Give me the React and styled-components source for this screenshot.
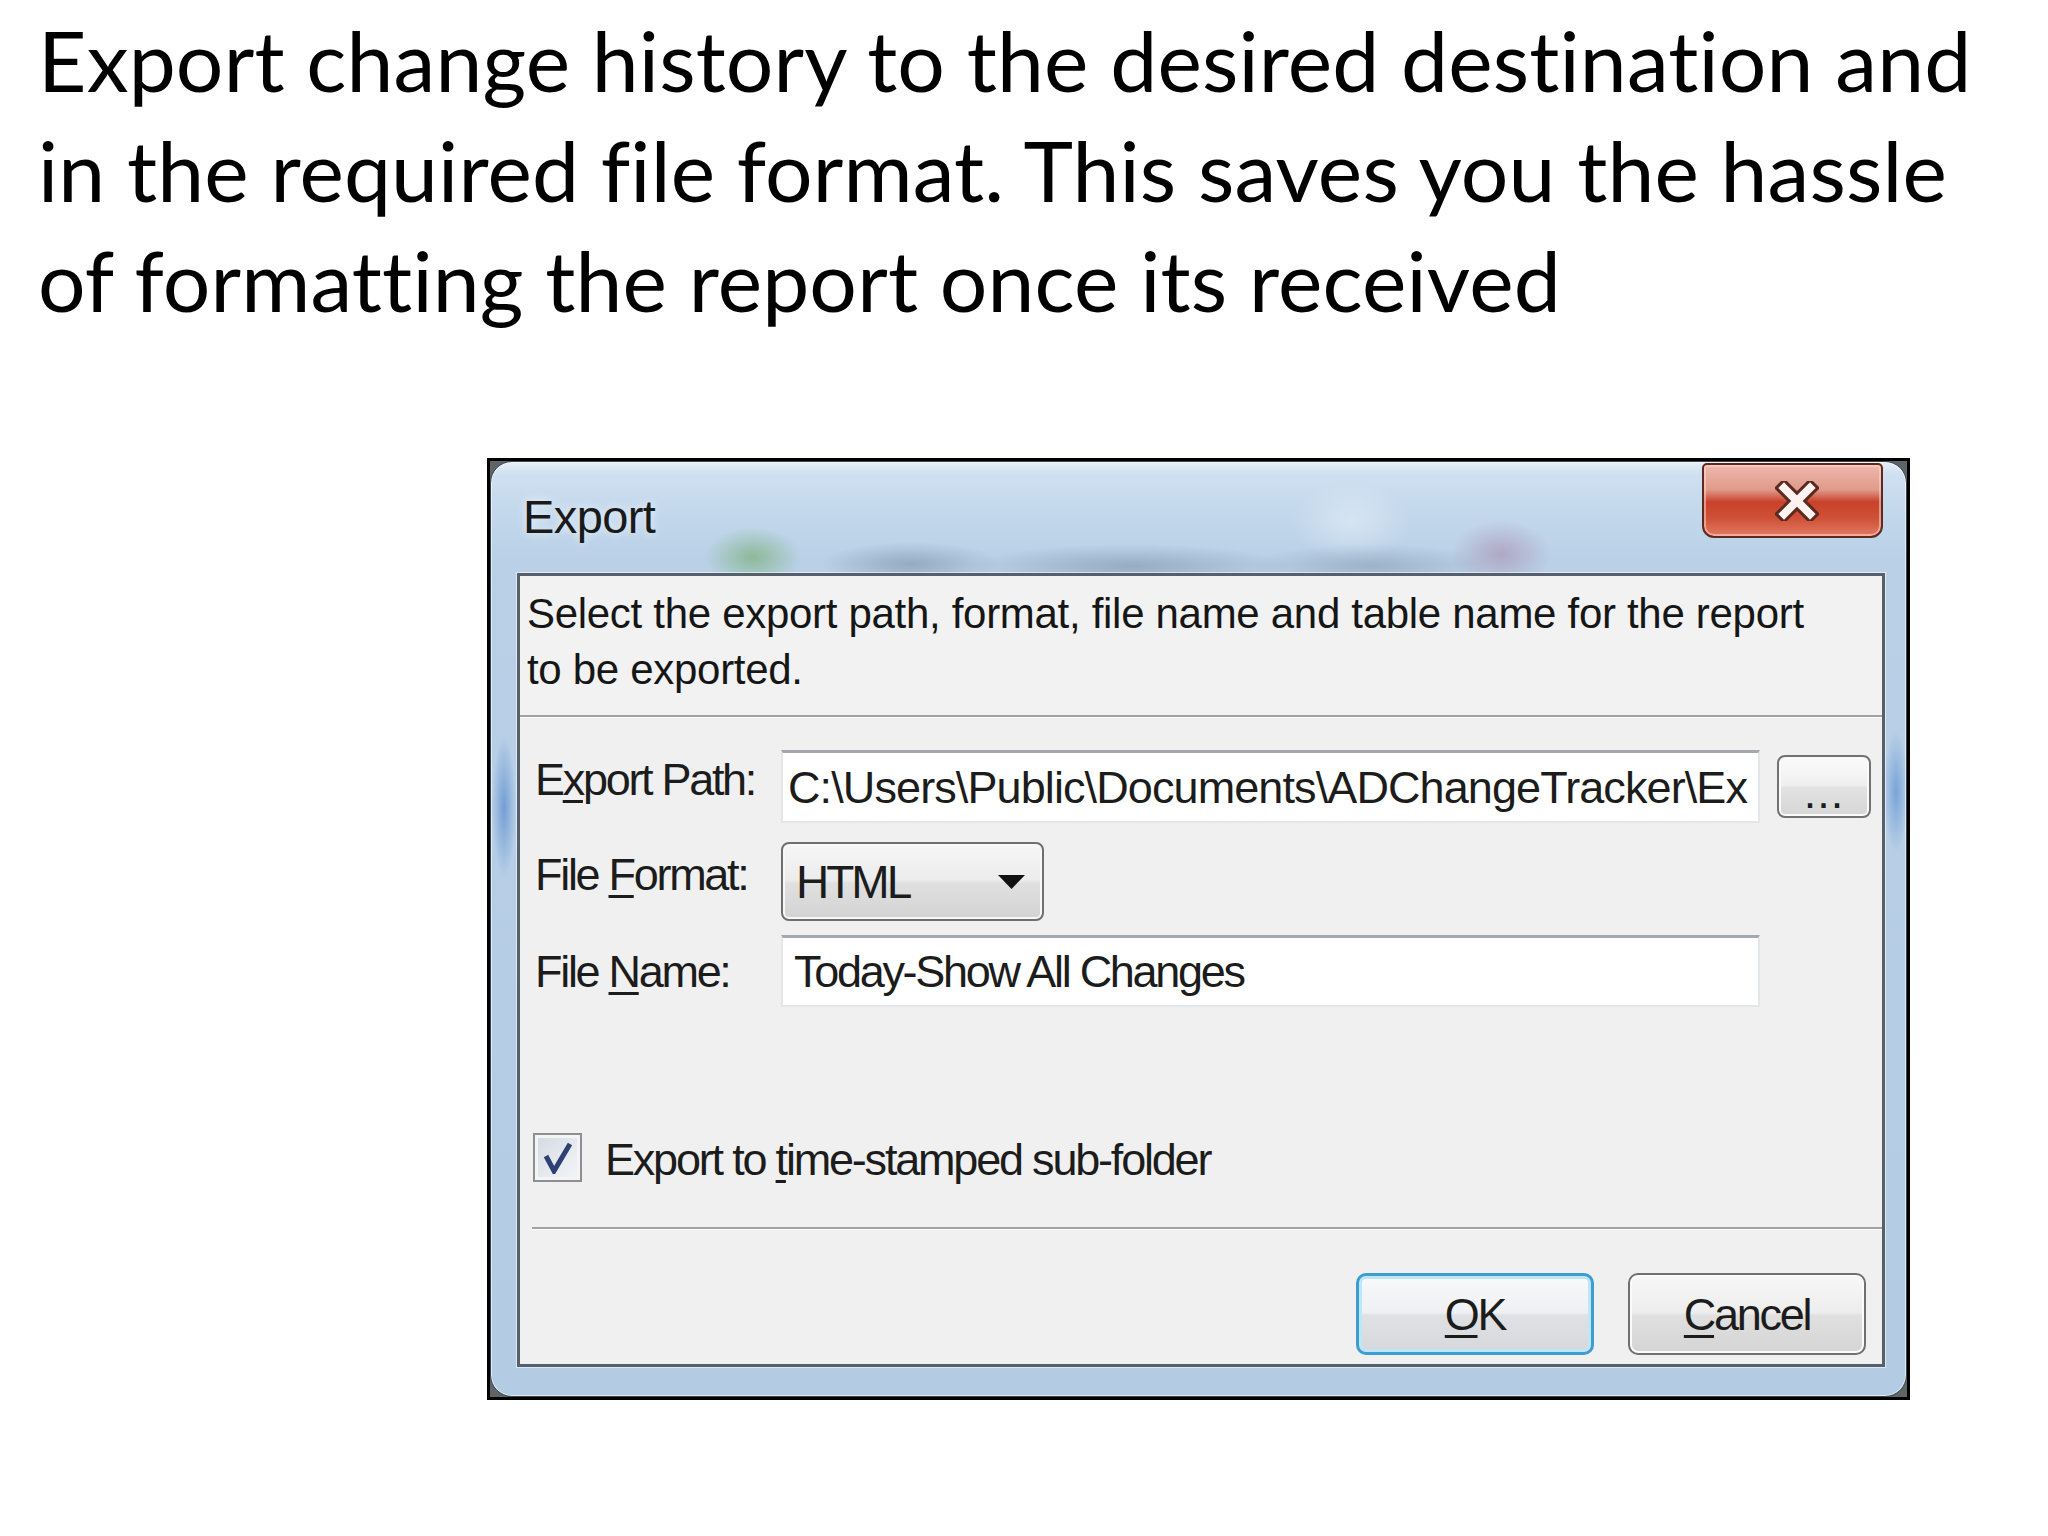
import React from "react";
import styled, { createGlobalStyle } from "styled-components";

const GlobalStyle = createGlobalStyle`
  html, body { margin: 0; padding: 0; background: #ffffff; }
  body { width: 2048px; min-height: 1536px; overflow: hidden; }
  * { box-sizing: border-box; }
`;

const Page = styled.div`
  width: 2048px;
  min-height: 1536px;
  background: #ffffff;
  padding-top: 5px;
`;

const Heading = styled.p`
  margin: 0;
  padding-left: 38px;
  font-family: Lato, "Open Sans", sans-serif;
  font-size: 84px;
  line-height: 110px;
  letter-spacing: 0.15px;
  color: #000000;
  white-space: nowrap;
  font-variant-ligatures: none;
  font-feature-settings: "liga" 0, "clig" 0;
`;

const Window = styled.div`
  margin: 123px 0 0 487px;
  width: 1423px;
  height: 942px;
  border: 3px solid #000000;
  background: #5f6468;
  display: flex;
  font-family: "Liberation Sans", Arial, sans-serif;
  color: #1c1c1c;
`;

const Frame = styled.div`
  flex: 1;
  display: flex;
  flex-direction: column;
  border: 1px solid #3a444f;
  border-radius: 22px;
  padding: 0 21px 29px 26px;
  box-shadow: inset 0 0 0 1px rgba(255, 255, 255, 0.6);
  background:
    radial-gradient(ellipse 12px 70px at 13px 345px, rgba(70, 125, 200, 0.6), transparent),
    radial-gradient(ellipse 12px 60px at 1405px 330px, rgba(80, 135, 205, 0.6), transparent),
    radial-gradient(ellipse 48px 30px at 262px 95px, rgba(110, 170, 100, 0.6), transparent),
    radial-gradient(ellipse 90px 22px at 420px 102px, rgba(80, 100, 120, 0.35), transparent),
    radial-gradient(ellipse 160px 22px at 640px 104px, rgba(85, 105, 125, 0.35), transparent),
    radial-gradient(ellipse 50px 34px at 1010px 92px, rgba(160, 105, 145, 0.4), transparent),
    radial-gradient(ellipse 120px 22px at 880px 104px, rgba(90, 110, 130, 0.3), transparent),
    radial-gradient(ellipse 60px 40px at 860px 60px, rgba(255, 255, 255, 0.35), transparent),
    linear-gradient(180deg, #e6f0f9 0px, #cfe0f1 12px, #c3d8ec 50px, #b9d0e7 100px, #b3cbe3 100%);
`;

const TitleBar = styled.div`
  height: 111px;
  display: flex;
  justify-content: space-between;
  align-items: flex-start;
  padding-left: 6px;
`;

const Title = styled.div`
  margin-top: 31px;
  font-size: 47px;
  line-height: 47px;
  letter-spacing: -0.6px;
  color: #1a1a1a;
  text-shadow: 0 0 10px rgba(255, 255, 255, 0.8);
`;

const CloseButton = styled.div`
  width: 181px;
  height: 75px;
  margin: 1px 2px 0 0;
  border: 2px solid #5e2a20;
  border-radius: 5px 5px 12px 12px;
  display: flex;
  align-items: center;
  justify-content: center;
  padding-left: 8px;
  background: linear-gradient(
    180deg,
    #ecb8ac 0%,
    #e09a8a 35%,
    #c9412a 52%,
    #cf5138 75%,
    #e07a62 100%
  );
  box-shadow: inset 0 0 0 2px rgba(255, 215, 205, 0.55);
`;

const Client = styled.div`
  flex: 1;
  display: flex;
  flex-direction: column;
  border: 3px solid #56606b;
  background: #f0f0f0;
  box-shadow: 0 0 0 1px rgba(255, 255, 255, 0.55);
`;

const Description = styled.div`
  height: 139px;
  padding: 10px 0 0 7px;
  font-size: 42px;
  line-height: 56px;
  letter-spacing: -0.3px;
  color: #161616;
  background: #f2f2f2;
`;

const Separator = styled.div`
  height: 3px;
  margin-left: ${(p) => p.$inset || 0}px;
  margin-top: ${(p) => p.$top || 0}px;
  background: #a2a2a2;
  border-bottom: 1px solid #ffffff;
`;

const Fields = styled.div`
  display: flex;
  flex-direction: column;
  padding: 32px 0 0 15px;
`;

const Row = styled.div`
  display: flex;
  align-items: flex-start;
  margin-top: ${(p) => p.$top || 0}px;
`;

const Label = styled.div`
  width: 246px;
  margin-top: ${(p) => p.$top}px;
  font-size: 45px;
  line-height: 45px;
  letter-spacing: -2.3px;
  white-space: nowrap;
`;

const Key = styled.span`
  text-decoration: underline;
  text-decoration-thickness: 3px;
  text-underline-offset: 5px;
`;

const TextBox = styled.div`
  width: 979px;
  height: ${(p) => p.$h}px;
  display: flex;
  align-items: center;
  padding-left: ${(p) => p.$pad}px;
  background: #ffffff;
  border: 2px solid #e4e7ea;
  border-top: 3px solid #a4a8ac;
  overflow: hidden;
  white-space: nowrap;
  font-size: 45px;
  line-height: 45px;
  letter-spacing: ${(p) => p.$ls}px;
  color: #1c1c1c;
`;

const BrowseButton = styled.div`
  width: 94px;
  height: 63px;
  margin: 5px 0 0 17px;
  border: 2px solid #727272;
  border-radius: 8px;
  display: flex;
  align-items: flex-end;
  justify-content: center;
  padding-bottom: 1px;
  font-size: 45px;
  line-height: 45px;
  letter-spacing: 1px;
  background: linear-gradient(180deg, #fbfbfb 0%, #efefef 48%, #e2e2e2 52%, #d6d6d6 100%);
  box-shadow: inset 0 0 0 2px #fafafa;
`;

const Combo = styled.div`
  width: 263px;
  height: 79px;
  display: flex;
  align-items: center;
  justify-content: space-between;
  padding: 0 17px 0 13px;
  border: 2px solid #6f6f6f;
  border-radius: 8px;
  background: linear-gradient(180deg, #f6f6f6 0%, #ececec 48%, #e0e0e0 52%, #d3d3d3 100%);
  box-shadow: inset 0 0 0 2px #f8f8f8;
  font-size: 46px;
  line-height: 46px;
  letter-spacing: -3px;
`;

const CheckRow = styled.div`
  display: flex;
  align-items: flex-start;
  gap: 23px;
  margin: 126px 0 0 -2px;
`;

const CheckBox = styled.div`
  width: 49px;
  height: 49px;
  border: 2px solid #8e8f90;
  display: flex;
  align-items: center;
  justify-content: center;
  background: linear-gradient(135deg, #d3d9e1 0%, #e6eaef 55%, #f5f7f9 100%);
  box-shadow: inset 0 0 0 3px #f3f4f5;
`;

const CheckLabel = styled.div`
  margin-top: 4px;
  font-size: 45px;
  line-height: 45px;
  letter-spacing: -2.2px;
  white-space: nowrap;
`;

const ButtonRow = styled.div`
  display: flex;
  justify-content: flex-end;
  gap: 34px;
  padding: 43px 16px 0 0;
`;

const DialogButton = styled.div`
  width: 238px;
  height: 82px;
  display: flex;
  align-items: center;
  justify-content: center;
  font-size: 45px;
  line-height: 45px;
  letter-spacing: -2.3px;
  border-radius: 10px;
  border: ${(p) => (p.$default ? "3px solid #3d9dcf" : "2px solid #707070")};
  background: ${(p) =>
    p.$default
      ? "linear-gradient(180deg, #f7f9fb 0%, #eef0f3 48%, #dfe1e4 52%, #d6d8db 100%)"
      : "linear-gradient(180deg, #f7f7f7 0%, #ededed 48%, #e0e0e0 52%, #d4d4d4 100%)"};
  box-shadow: ${(p) =>
    p.$default ? "inset 0 0 0 3px #bfe6f8" : "inset 0 0 0 2px #fbfbfb"};
`;

const CloseGlyph = () => (
  <svg width="44" height="40" viewBox="0 0 44 40">
    <path d="M9 7 L35 33 M35 7 L9 33" stroke="#5a2a22" strokeWidth="14" strokeLinecap="square" />
    <path d="M9 7 L35 33 M35 7 L9 33" stroke="#fdf2ef" strokeWidth="8" strokeLinecap="square" />
  </svg>
);

const ArrowGlyph = () => (
  <svg width="27" height="14" viewBox="0 0 27 14">
    <path d="M0 0 L27 0 L13.5 14 Z" fill="#111111" />
  </svg>
);

const CheckGlyph = () => (
  <svg width="30" height="32" viewBox="0 0 30 32">
    <path d="M3 14 L11 29 L27 2" fill="none" stroke="#2d4272" strokeWidth="5" strokeLinejoin="miter" />
  </svg>
);

export default function App() {
  return (
    <>
      <GlobalStyle />
      <Page>
        <Heading>
          Export change history to the desired destination and
          <br />
          in the required file format. This saves you the hassle
          <br />
          of formatting the report once its received
        </Heading>
        <Window>
          <Frame>
            <TitleBar>
              <Title>Export</Title>
              <CloseButton>
                <CloseGlyph />
              </CloseButton>
            </TitleBar>
            <Client>
              <Description>
                Select the export path, format, file name and table name for the report
                <br />
                to be exported.
              </Description>
              <Separator />
              <Fields>
                <Row>
                  <Label $top={7}>
                    E<Key>x</Key>port Path:
                  </Label>
                  <TextBox $h={73} $pad={5} $ls={-0.9}>
                    C:\Users\Public\Documents\ADChangeTracker\Ex
                  </TextBox>
                  <BrowseButton>...</BrowseButton>
                </Row>
                <Row $top={19}>
                  <Label $top={10}>
                    File <Key>F</Key>ormat:
                  </Label>
                  <Combo>
                    <span>HTML</span>
                    <ArrowGlyph />
                  </Combo>
                </Row>
                <Row $top={14}>
                  <Label $top={14}>
                    File <Key>N</Key>ame:
                  </Label>
                  <TextBox $h={72} $pad={11} $ls={-2.3}>
                    Today-Show All Changes
                  </TextBox>
                </Row>
                <CheckRow>
                  <CheckBox>
                    <CheckGlyph />
                  </CheckBox>
                  <CheckLabel>
                    Export to <Key>t</Key>ime-stamped sub-folder
                  </CheckLabel>
                </CheckRow>
              </Fields>
              <Separator $inset={12} $top={45} />
              <ButtonRow>
                <DialogButton $default>
                  <Key>O</Key>K
                </DialogButton>
                <DialogButton>
                  <Key>C</Key>ancel
                </DialogButton>
              </ButtonRow>
            </Client>
          </Frame>
        </Window>
      </Page>
    </>
  );
}
